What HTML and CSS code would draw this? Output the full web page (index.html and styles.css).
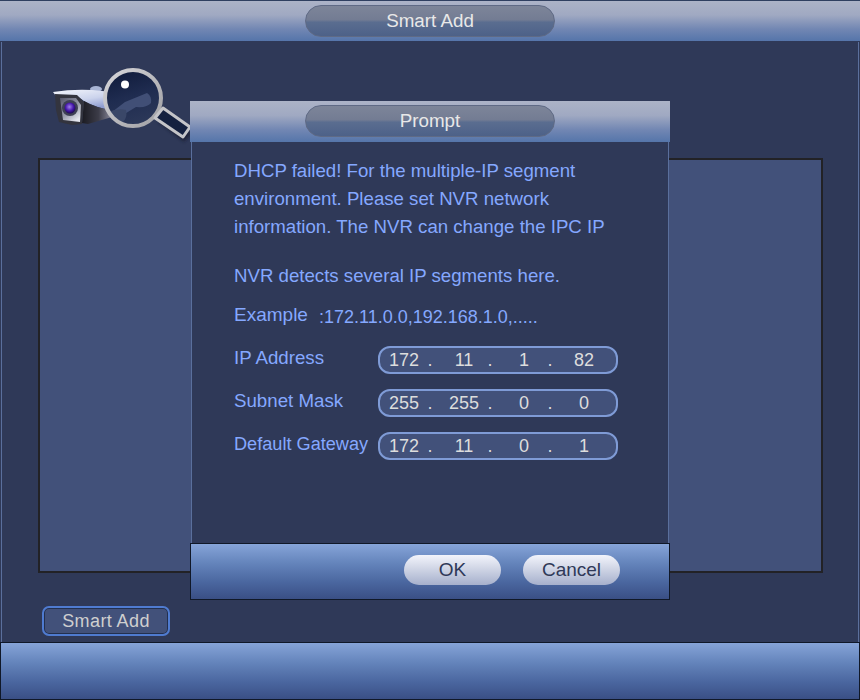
FILE: index.html
```html
<!DOCTYPE html>
<html lang="en">
<head>
<meta charset="utf-8">
<title>Smart Add</title>
<link rel="stylesheet" href="styles.css">
</head>
<body>
<div class="screen">
  <header class="titlebar"><div class="pill">Smart Add</div></header>
  <main class="main">
    <div class="icon-row">
      <svg class="cam-icon" width="145" height="84" viewBox="50 64 145 84" aria-hidden="true">
        <defs>
          <linearGradient id="shell" x1="0" y1="0" x2="0.5" y2="1">
            <stop offset="0" stop-color="#f4f6fc"/><stop offset="0.6" stop-color="#cbd3ec"/><stop offset="1" stop-color="#8f9dd0"/>
          </linearGradient>
          <linearGradient id="under" x1="0" y1="0" x2="1" y2="0">
            <stop offset="0" stop-color="#1b1b22"/><stop offset="0.55" stop-color="#3c3c48"/><stop offset="1" stop-color="#8a8a9c"/>
          </linearGradient>
          <linearGradient id="face" x1="0" y1="0" x2="0.7" y2="1">
            <stop offset="0" stop-color="#55566a"/><stop offset="0.6" stop-color="#9a9dac"/><stop offset="1" stop-color="#e4e6ee"/>
          </linearGradient>
          <radialGradient id="lens" cx="0.45" cy="0.4" r="0.6">
            <stop offset="0" stop-color="#a080ec"/><stop offset="0.6" stop-color="#4618aa"/><stop offset="1" stop-color="#1c0a50"/>
          </radialGradient>
          <linearGradient id="glass" x1="0.2" y1="0" x2="0.5" y2="1">
            <stop offset="0" stop-color="#0f1a3a"/><stop offset="0.5" stop-color="#1f2c50"/><stop offset="1" stop-color="#2c3859"/>
          </linearGradient>
          <linearGradient id="ring" x1="0" y1="0" x2="1" y2="1">
            <stop offset="0" stop-color="#d6d6da"/><stop offset="1" stop-color="#a0a0a4"/>
          </linearGradient>
          <filter id="soft" x="-20%" y="-20%" width="140%" height="140%"><feGaussianBlur stdDeviation="1.5"/></filter>
        </defs>
        <path d="M158 122 L184 142 L192 134 L166 113 Z" fill="#12172a" opacity="0.6" filter="url(#soft)"/>
        <ellipse cx="96" cy="89" rx="6" ry="3" fill="#a8b4d4"/>
        <path d="M53 92 Q72 89 92 90 L112 92 L112 110 Q96 108 84 101 L77 96 L56 96 Z" fill="url(#shell)"/>
        <path d="M84 101 Q96 108 112 110 L112 117 L88 124 L82 123 Z" fill="url(#under)"/>
        <path d="M55 94 L77 95 L84 102 L82 124 L72 125 L59 122 L56 110 Z" fill="#33343e"/>
        <path d="M60 98 L76 98 L81 105 L80 122 L63 120 Z" fill="url(#face)"/>
        <circle cx="70" cy="108" r="8" fill="#3e4054"/>
        <circle cx="70" cy="108" r="5.500" fill="url(#lens)"/>
        <circle cx="133" cy="98" r="28" fill="url(#glass)"/>
        <path d="M112 112 L125 102 L147 93 Q152 96 151 103 Q147 108 136 107 L118 118 Z" fill="#414f76"/>
        <path d="M108 112 Q118 108 126 110 Q128 118 122 123 Q112 120 108 112 Z" fill="#3a4768"/>
        <circle cx="133" cy="98" r="28" fill="none" stroke="url(#ring)" stroke-width="4"/>
        <path d="M155 118 L163 108 L190 127 L183 137 Z" fill="#14203f" stroke="#c4c4c8" stroke-width="3" stroke-linejoin="round"/>
        <circle cx="125" cy="84.500" r="4" fill="#ffffff"/>
      </svg>
    </div>
    <section class="panel"></section>
    <button class="btn-outline" type="button">Smart Add</button>
  </main>
  <footer class="bottombar"></footer>

  <div class="dialog">
    <header class="dialog-head"><div class="pill">Prompt</div></header>
    <div class="dialog-body">
      <p class="msg">DHCP failed! For the multiple-IP segment<br>environment. Please set NVR network<br>information. The NVR can change the IPC IP</p>
      <p class="msg detects">NVR detects several IP segments here.</p>
      <div class="example"><span class="example-label">Example</span><span class="example-val">:172.11.0.0,192.168.1.0,.....</span></div>
      <div class="form">
        <label class="form-label">IP Address</label>
        <div class="ip"><span class="oct">172</span><span class="dot">.</span><span class="oct">11</span><span class="dot">.</span><span class="oct">1</span><span class="dot">.</span><span class="oct">82</span></div>
        <label class="form-label">Subnet Mask</label>
        <div class="ip"><span class="oct">255</span><span class="dot">.</span><span class="oct">255</span><span class="dot">.</span><span class="oct">0</span><span class="dot">.</span><span class="oct">0</span></div>
        <label class="form-label form-label-tight">Default Gateway</label>
        <div class="ip"><span class="oct">172</span><span class="dot">.</span><span class="oct">11</span><span class="dot">.</span><span class="oct">0</span><span class="dot">.</span><span class="oct">1</span></div>
      </div>
    </div>
    <footer class="dialog-foot">
      <button class="btn" type="button">OK</button>
      <button class="btn" type="button">Cancel</button>
    </footer>
  </div>
</div>
</body>
</html>
```
FILE: styles.css
```css
* { box-sizing: border-box; }
html, body { margin: 0; padding: 0; }
body {
  background: #2f3958;
  font-family: "Liberation Sans", Arial, sans-serif;
  font-size: 18px;
}
.screen {
  position: relative;
  width: 860px;
  height: 700px;
  display: flex;
  flex-direction: column;
  background: #2f3958;
  overflow: hidden;
}
.titlebar {
  height: 42px;
  flex: none;
  display: flex;
  justify-content: center;
  align-items: flex-start;
  padding-top: 4px;
  border-top: 1px solid #2f3f60;
  border-bottom: 1px solid #2f3958;
  background: linear-gradient(#acb3c7 0%, #a0a9c2 35%, #7287b3 70%, #5575aa 100%);
}
.pill {
  width: 250px;
  height: 32px;
  border-radius: 16px;
  border: 1px solid #5f6a85;
  background: linear-gradient(#7d8599 0%, #737c93 46%, #5a6d90 54%, #4d6188 100%);
  color: #e8e8e8;
  text-align: center;
  font-size: 18.8px;
  line-height: 30px;
}
.main {
  flex: 1;
  margin: 0 1px;
  padding: 0 35px 0 36px;
  border-left: 1px solid #5a6f9c;
  border-right: 1px solid #5a6f9c;
  display: flex;
  flex-direction: column;
  align-items: flex-start;
}
.icon-row {
  height: 116px;
  width: 100%;
  flex: none;
  padding-top: 22px;
  padding-left: 12px;
}
.cam-icon { display: block; position: relative; z-index: 1; }
.panel {
  width: 785px;
  height: 415px;
  flex: none;
  background: #42517a;
  border: 2px solid #222226;
}
.btn-outline {
  margin: 33px 0 0 4px;
  width: 128px;
  height: 30px;
  padding: 0;
  background: #42517a;
  border: 2px solid #4f7bd0;
  border-radius: 7px;
  box-shadow: inset 0 0 0 1px #23304f;
  color: #cfcfcf;
  font: 18px/24px "Liberation Sans", Arial, sans-serif;
  letter-spacing: 0.4px;
}
.bottombar {
  height: 58px;
  flex: none;
  border: 1px solid #101828;
  background: linear-gradient(#86a4d8 0%, #6484bb 35%, #4a669f 70%, #3a4f85 100%);
}
.dialog {
  position: absolute;
  left: 190px;
  top: 101px;
  width: 480px;
  height: 499px;
  z-index: 2;
  display: flex;
  flex-direction: column;
}
.dialog-head {
  height: 41px;
  flex: none;
  display: flex;
  justify-content: center;
  align-items: flex-start;
  padding-top: 4px;
  background: linear-gradient(#acb3c7 0%, #a0a9c2 35%, #7287b3 70%, #5575aa 100%);
}
.dialog-body {
  flex: 1;
  margin: 0 1px;
  padding: 15px 0 0 42px;
  background: #2f3958;
  border-left: 1px solid #5a6f9c;
  border-right: 1px solid #5a6f9c;
  color: #85a8ff;
}
.msg { margin: 0; font-size: 18.65px; line-height: 28px; white-space: nowrap; }
.detects { margin-top: 21px; }
.example {
  margin-top: 13px;
  height: 26px;
  display: flex;
  line-height: 24px;
}
.example-label { font-size: 19px; }
.example-val { margin: 2px 0 0 11px; }
.form {
  margin-top: 17px;
  display: grid;
  grid-template-columns: 144px 240px;
  grid-auto-rows: 28px;
  row-gap: 15px;
}
.form-label { font-size: 18.7px; line-height: 24px; white-space: nowrap; }
.form-label-tight { font-size: 18.15px; }
.ip {
  display: flex;
  padding-left: 2px;
  background: #42517a;
  border: 2px solid #7f9bd6;
  border-radius: 12px;
  color: #dddddd;
  line-height: 24px;
}
.oct { width: 44px; text-align: center; }
.dot { width: 8px; margin-right: 8px; text-align: center; }
.dialog-foot {
  height: 57px;
  flex: none;
  display: flex;
  gap: 22px;
  padding: 11px 0 0 213px;
  border: 1px solid #101828;
  background: linear-gradient(#86a4d8 0%, #6484bb 35%, #4a669f 70%, #3a4f85 100%);
}
.btn {
  width: 97px;
  height: 30px;
  padding: 0 0 1px;
  border: 0;
  border-radius: 15px;
  background: linear-gradient(#f2f4fb 0%, #d4d9e8 40%, #a6b0cc 100%);
  color: #2f3958;
  font: 19px/28px "Liberation Sans", Arial, sans-serif;
}
```
